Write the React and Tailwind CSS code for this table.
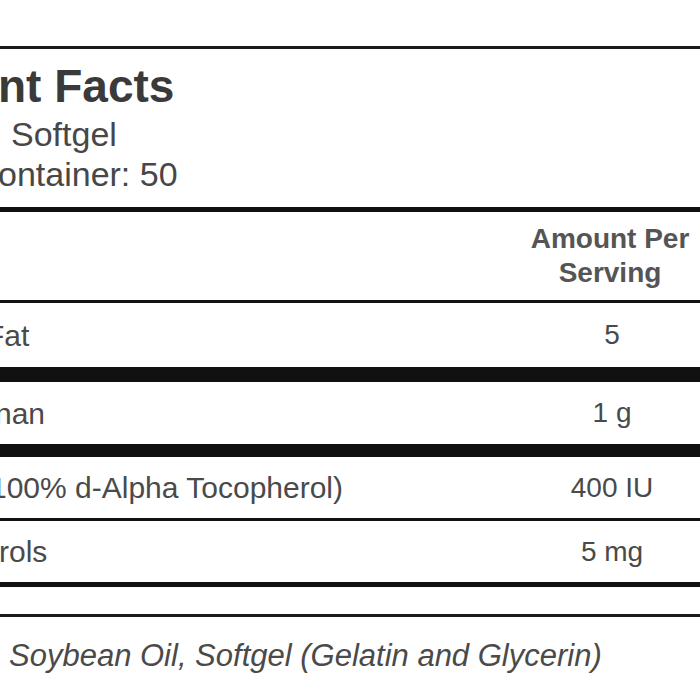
// the panel is cropped on the left: the part of a text before the cut sits in a right-aligned lead box
const rows = [
    { lead: 'Calories From', leadW: 'w-[246px] pr-[8px]', tail: 'Fat', value: '5', h: 'h-[64px]', after: 'h-[15px]' },
    { lead: 'Sesame Oil Lig', leadW: 'w-[255px]', tail: 'nan', value: '1 g', h: 'h-[62px]', after: 'h-[13px]' },
    { lead: 'Vitamin E (as', leadW: 'w-[250px] pr-[8px]', tail: '100% d-Alpha Tocopherol)', value: '400 IU', h: 'h-[61px]', after: 'h-[3px]' },
    { lead: 'Mixed tocophe', leadW: 'w-[259px]', tail: 'rols', value: '5 mg', h: 'h-[61px]', after: 'h-[5px]' },
];

const Lead = ({ w, children }) => (
    <span className={`inline-block shrink-0 text-right whitespace-nowrap ${w}`}>{children}</span>
);

const App = () => {
    return (
        <div className="w-[700px] h-[700px] overflow-hidden bg-white font-['Liberation_Sans',Arial,sans-serif]">
            <div className="ml-[-260px] w-[962px] pt-[46px]">
                <div className="border-t-[3px] border-[#1a1a1a]">
                    <div className="pt-[14px] pb-[13px]">
                        <h1 className="flex text-[46px] leading-[46px] font-bold text-[#3a3a3a] whitespace-nowrap">
                            <Lead w="w-[258px]">Suppleme</Lead>
                            <span>nt Facts</span>
                        </h1>
                        <div className="mt-[5px] text-[34px] leading-[40px] text-[#474747]">
                            <p className="flex whitespace-nowrap">
                                <Lead w="w-[271px] pr-[16px]">Serving Size: 1</Lead>
                                <span>Softgel</span>
                            </p>
                            <p className="flex whitespace-nowrap">
                                <Lead w="w-[258px]">Servings Per C</Lead>
                                <span>ontainer: 50</span>
                            </p>
                        </div>
                    </div>
                    <div className="h-[5px] bg-[#111]" />

                    <div className="flex h-[88px] items-center">
                        <div className="flex-1" />
                        <div className="w-[184px] text-center text-[28px] leading-[34px] font-bold text-[#555]">
                            Amount Per
                            <br />
                            Serving
                        </div>
                    </div>
                    <div className="h-[3px] bg-[#111]" />

                    {rows.map(row => (
                        <div key={row.value}>
                            <div className={`flex items-center ${row.h} text-[#4a4a4a]`}>
                                <div className="flex flex-1 whitespace-nowrap text-[30px]">
                                    <Lead w={row.leadW}>{row.lead}</Lead>
                                    <span>{row.tail}</span>
                                </div>
                                <div className="w-[180px] text-center text-[28px]">{row.value}</div>
                            </div>
                            <div className={`${row.after} bg-[#111]`} />
                        </div>
                    ))}

                    <div className="h-[27px]" />
                    <div className="h-[3px] bg-[#1a1a1a]" />
                </div>

                <p className="mt-[21px] flex text-[31px] leading-[36px] italic text-[#4a4a4a] whitespace-nowrap">
                    <Lead w="w-[269px] pr-[9px]">Other Ingredients:</Lead>
                    <span>Soybean Oil, Softgel (Gelatin and Glycerin)</span>
                </p>
            </div>
        </div>
    );
};

export default App;
